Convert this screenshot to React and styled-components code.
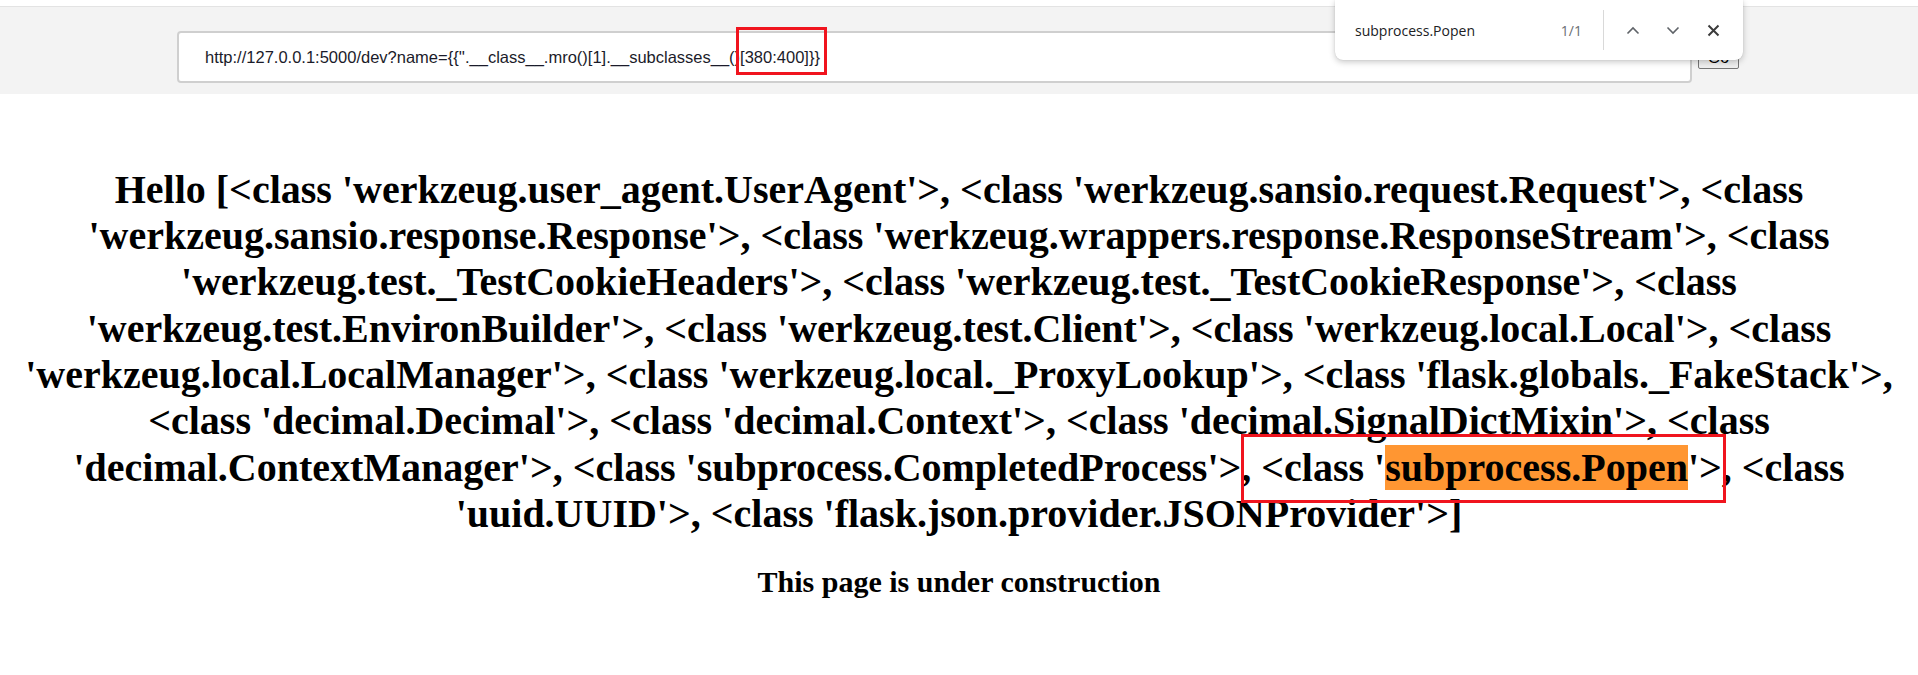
import styled, { createGlobalStyle } from 'styled-components';

const GlobalStyle = createGlobalStyle`
  html, body {
    margin: 0;
    background: #ffffff;
  }
`;

const Page = styled.div`
  width: 100%;
  min-height: 675px;
  position: relative;
`;

const TopStrip = styled.div`
  height: 6px;
  background: #ffffff;
  border-bottom: 1px solid #e3e3e3;
`;

const Toolbar = styled.div`
  height: 87px;
  box-sizing: border-box;
  background: #f3f3f3;
  padding: 24px 0 0 177px;
  display: flex;
  align-items: flex-start;
  gap: 6px;
`;

const UrlField = styled.div`
  width: 1515px;
  height: 52px;
  box-sizing: border-box;
  background: #ffffff;
  border: 2px solid #cfcfcf;
  border-radius: 4px;
  padding-left: 26px;
  display: flex;
  align-items: center;

  font-family: 'Liberation Sans', Arial, sans-serif;
  font-size: 16.5px;
  color: #1b1b2a;
  white-space: nowrap;
`;

const GoButton = styled.button`
  margin-top: 15px;
  width: 41px;
  height: 23px;
  box-sizing: border-box;
  background: #efefef;
  border: 1px solid #767676;
  border-radius: 2px;
  font-family: 'Liberation Sans', Arial, sans-serif;
  font-size: 16px;
  color: #000;
  padding: 0;
`;

/* red annotation boxes drawn over the screenshot */
const Boxed = styled.span`
  position: relative;

  &::after {
    content: '';
    position: absolute;
    top: ${(p) => p.$top}px;
    bottom: ${(p) => p.$bottom}px;
    left: ${(p) => p.$left}px;
    right: ${(p) => p.$right}px;
    border: 3px solid #f0141e;
    pointer-events: none;
  }
`;

const FindBar = styled.div`
  position: absolute;
  top: 0;
  left: 1335px;
  width: 408px;
  height: 60px;
  box-sizing: border-box;
  background: #ffffff;
  border-radius: 0 0 8px 8px;
  box-shadow: 0 2px 6px rgba(0, 0, 0, 0.22), 0 0 1px rgba(0, 0, 0, 0.2);
  display: flex;
  align-items: center;
  padding: 0 10px 0 20px;
  font-family: 'Open Sans', 'Noto Sans', sans-serif;
`;

const FindQuery = styled.span`
  flex: 1;
  font-size: 14px;
  color: #202124;
`;

const FindCount = styled.span`
  font-size: 14px;
  color: #6b6e73;
  margin-right: 21px;
`;

const FindDivider = styled.div`
  width: 1px;
  height: 40px;
  background: #d9d9d9;
  margin-right: 9px;
`;

const IconButton = styled.div`
  width: 40px;
  height: 30px;
  display: flex;
  align-items: center;
  justify-content: center;
`;

const Content = styled.main`
  padding: 46px 8px 0;
  font-family: 'Liberation Serif', 'Times New Roman', serif;
  color: #000;
`;

const Title = styled.h1`
  margin: 0.67em 0;
  font-size: 40px;
  line-height: 46.3px;
  font-weight: 700;
  text-align: center;
`;

const Highlight = styled.mark`
  background: #ff9632;
  color: #000;
`;

const Subtitle = styled.h2`
  margin: 0.83em 0;
  font-size: 30px;
  line-height: 35px;
  font-weight: 700;
  text-align: center;
`;

const Chevron = ({ up }) => (
  <svg width="14" height="9" viewBox="0 0 14 9">
    <path
      d={up ? 'M1.5 7.5 L7 2 L12.5 7.5' : 'M1.5 1.5 L7 7 L12.5 1.5'}
      fill="none"
      stroke="#5f6368"
      strokeWidth="1.6"
    />
  </svg>
);

const Close = () => (
  <svg width="13" height="13" viewBox="0 0 13 13">
    <path d="M1.5 1.5 L11.5 11.5 M11.5 1.5 L1.5 11.5" stroke="#3c3c3c" strokeWidth="2" />
  </svg>
);

export default function App() {
  return (
    <Page>
      <GlobalStyle />
      <TopStrip />
      <Toolbar>
        <UrlField>
          http://127.0.0.1:5000/dev?name={"{{''.__class__.mro()[1].__subclasses__("}
          <Boxed $top={-21} $bottom={-8} $left={1} $right={-7}>
            {')[380:400]}}'}
          </Boxed>
        </UrlField>
        <GoButton>Go</GoButton>
      </Toolbar>

      <FindBar>
        <FindQuery>subprocess.Popen</FindQuery>
        <FindCount>1/1</FindCount>
        <FindDivider />
        <IconButton>
          <Chevron up />
        </IconButton>
        <IconButton>
          <Chevron />
        </IconButton>
        <IconButton>
          <Close />
        </IconButton>
      </FindBar>

      <Content>
        <Title>
          Hello [&lt;class 'werkzeug.user_agent.UserAgent'&gt;, &lt;class
          'werkzeug.sansio.request.Request'&gt;, &lt;class 'werkzeug.sansio.response.Response'&gt;,
          &lt;class 'werkzeug.wrappers.response.ResponseStream'&gt;, &lt;class
          'werkzeug.test._TestCookieHeaders'&gt;, &lt;class 'werkzeug.test._TestCookieResponse'&gt;,
          &lt;class 'werkzeug.test.EnvironBuilder'&gt;, &lt;class 'werkzeug.test.Client'&gt;,
          &lt;class 'werkzeug.local.Local'&gt;, &lt;class 'werkzeug.local.LocalManager'&gt;,
          &lt;class 'werkzeug.local._ProxyLookup'&gt;, &lt;class 'flask.globals._FakeStack'&gt;,
          &lt;class 'decimal.Decimal'&gt;, &lt;class 'decimal.Context'&gt;, &lt;class
          'decimal.SignalDictMixin'&gt;, &lt;class 'decimal.ContextManager'&gt;, &lt;class
          'subprocess.CompletedProcess'&gt;
          <Boxed $top={-11} $bottom={-13} $left={0} $right={6}>
            , &lt;class '<Highlight>subprocess.Popen</Highlight>'&gt;,
          </Boxed>{' '}
          &lt;class 'uuid.UUID'&gt;, &lt;class 'flask.json.provider.JSONProvider'&gt;]
        </Title>
        <Subtitle>This page is under construction</Subtitle>
      </Content>
    </Page>
  );
}
